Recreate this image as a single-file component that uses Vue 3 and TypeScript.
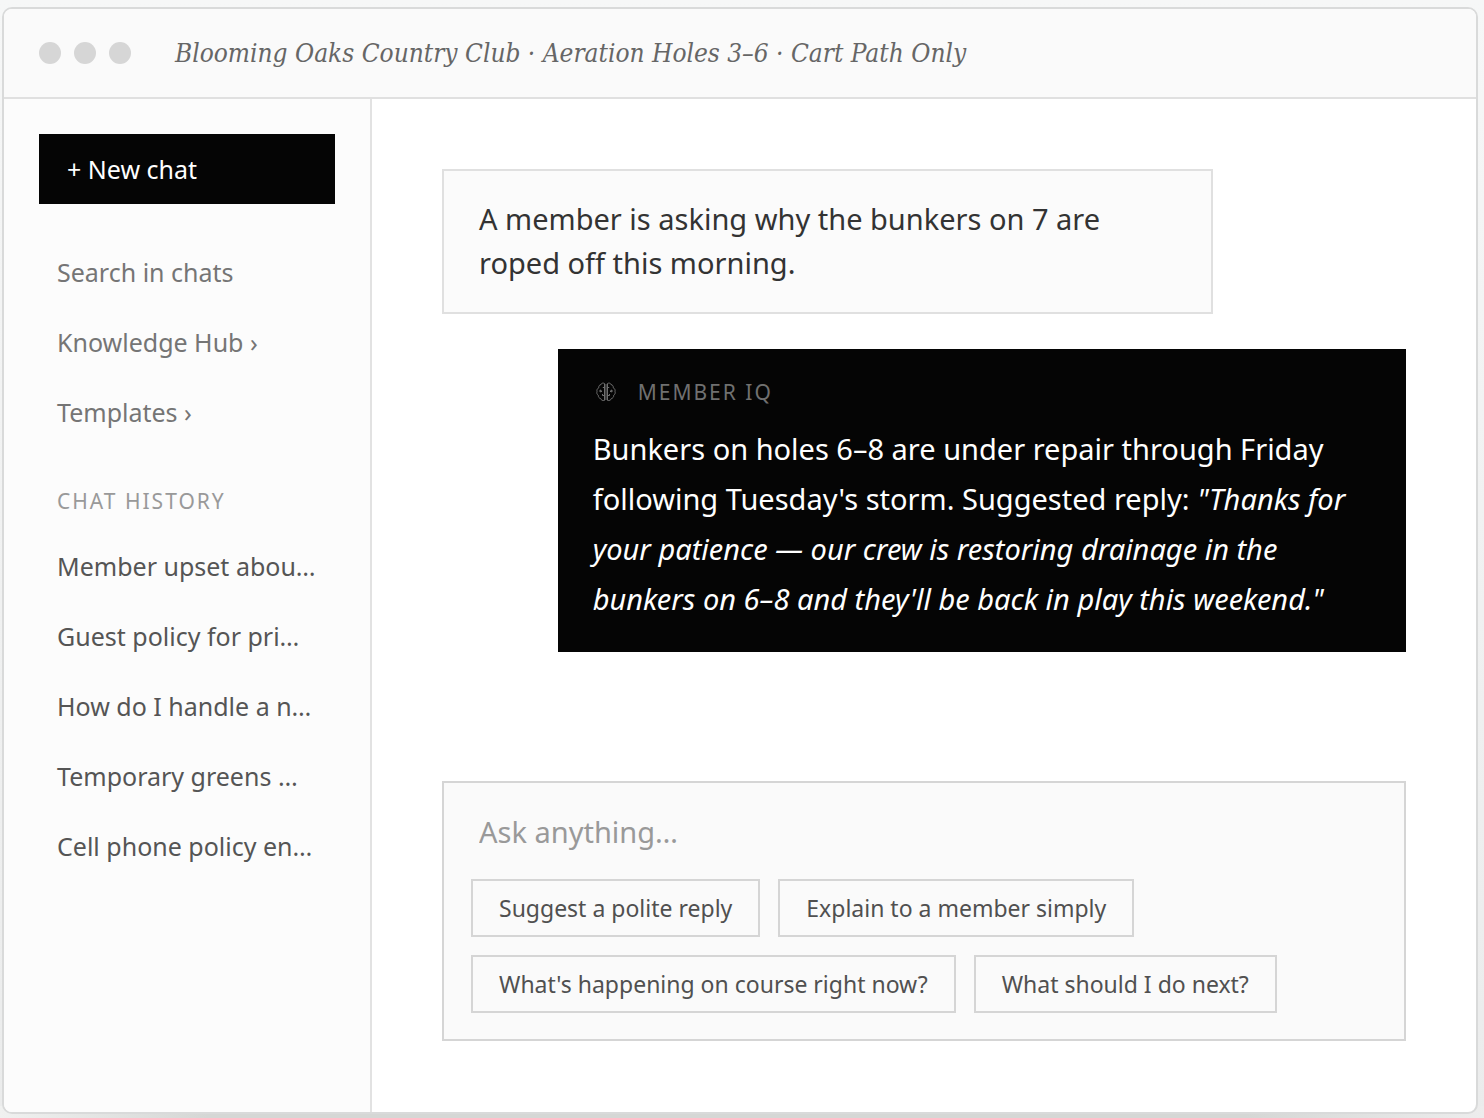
<script setup lang="ts">
import { ref } from 'vue'

const draft = ref('')

const links: string[] = ['Search in chats', 'Knowledge Hub ›', 'Templates ›']

const history: string[] = [
  'Member upset abou…',
  'Guest policy for pri…',
  'How do I handle a n…',
  'Temporary greens …',
  'Cell phone policy en…',
]

const prompts: string[] = [
  'Suggest a polite reply',
  'Explain to a member simply',
  "What's happening on course right now?",
  'What should I do next?',
]
</script>

<template>
  <div class="page">
    <div class="window">
      <header class="titlebar">
        <div class="dots"><span /><span /><span /></div>
        <h1>Blooming Oaks Country Club · Aeration Holes 3–6 · Cart Path Only</h1>
      </header>
      <div class="body">
        <aside class="sidebar">
          <button class="new-chat" type="button">+ New chat</button>
          <nav class="links">
            <button v-for="link in links" :key="link" type="button">{{ link }}</button>
          </nav>
          <h2>CHAT HISTORY</h2>
          <nav class="history">
            <button v-for="item in history" :key="item" type="button">{{ item }}</button>
          </nav>
        </aside>
        <main class="chat">
          <p class="message question">
            A member is asking why the bunkers on 7 are roped off this morning.
          </p>
          <article class="message answer">
            <div class="label">
              <svg viewBox="0 0 20 20" width="20" height="20" fill="none" stroke="currentColor" aria-hidden="true">
                <path d="M8.500 1.500C7 .6 5.300 1.200 5 2.600 3.400 2.800 2.500 4.200 2.800 5.700 1.300 6.500.6 8 1 9.500c-.5 1.500 0 3 1.300 3.800-.1 1.700.8 2.900 2.300 3.200.5 1.700 2.200 2.400 3.900 1.900z" />
                <path d="M11.500 1.500c1.500-.9 3.200-.3 3.500 1.100 1.600.2 2.500 1.600 2.200 3.100 1.500.8 2.200 2.300 1.800 3.800.5 1.500 0 3-1.300 3.800.1 1.700-.8 2.900-2.300 3.200-.5 1.700-2.200 2.400-3.900 1.900z" />
                <path d="M8.500 5.500H6.800M8.500 13.500H6.500V12M11.500 5.500h1.700M11.500 13.500h2V12M5 9.500h1M14 9.500h1" />
                <path d="M9.500 2v16M10.500 2v16" opacity=".5" />
                <circle cx="4.500" cy="9" r=".8" fill="currentColor" />
                <circle cx="15.500" cy="9" r=".8" fill="currentColor" />
              </svg>
              <span>MEMBER IQ</span>
            </div>
            <p>
              Bunkers on holes 6–8 are under repair through Friday following Tuesday's storm. Suggested reply:
              <em>"Thanks for your patience — our crew is restoring drainage in the bunkers on 6–8 and they'll be back in play this weekend."</em>
            </p>
          </article>
          <form class="composer" @submit.prevent>
            <input v-model="draft" type="text" placeholder="Ask anything…" aria-label="Ask anything" />
            <div class="prompts">
              <button v-for="prompt in prompts" :key="prompt" type="button">{{ prompt }}</button>
            </div>
          </form>
        </main>
      </div>
    </div>
  </div>
</template>

<style>
body {
  margin: 0;
}
</style>

<style scoped>
* {
  box-sizing: border-box;
}

.page {
  display: flex;
  min-height: 100vh;
  padding: 7px 6px 4px 2px;
  background:
    linear-gradient(90deg, #f0f1f0, #d5d7d5 14%, #d5d7d5 84%, #ededed) bottom / 100% 12px no-repeat,
    linear-gradient(180deg, #f6f7f7, #ebecec);
  font-family: "Segoe UI", "Noto Sans", "Open Sans", sans-serif;
}

.window {
  display: flex;
  flex: 1;
  flex-direction: column;
  min-width: 0;
  overflow: hidden;
  border: 2px solid #d9dada;
  border-radius: 10px;
  background: #fff;
}

.titlebar {
  display: flex;
  align-items: center;
  gap: 44px;
  height: 90px;
  padding: 0 35px;
  border-bottom: 2px solid #e0e0e0;
  background: #fafafa;
}

.dots {
  display: flex;
  gap: 13px;
}

.dots span {
  width: 22px;
  height: 22px;
  border-radius: 50%;
  background: #d6d6d6;
}

h1,
h2,
p {
  margin: 0;
  font-weight: 400;
}

h1 {
  color: #666;
  font: italic 26px/36px Georgia, "DejaVu Serif Condensed", "DejaVu Serif", serif;
  white-space: nowrap;
}

button,
input {
  border-radius: 0;
  font-family: inherit;
}

button {
  cursor: pointer;
}

.body {
  display: flex;
  flex: 1;
}

.sidebar {
  flex: none;
  width: 368px;
  padding: 35px;
  border-right: 2px solid #e2e2e2;
  background: #fcfcfc;
}

.sidebar button {
  display: block;
  width: 100%;
  height: 70px;
  padding: 0 18px;
  border: 0;
  background: none;
  font-size: 25px;
  line-height: 34px;
  text-align: left;
  white-space: nowrap;
}

.sidebar .new-chat {
  padding: 0 28px;
  background: #050505;
  color: #fff;
}

.links {
  margin-top: 33px;
}

.links button {
  color: #757575;
}

h2 {
  margin: 38px 0 14px;
  padding: 0 18px;
  color: #999;
  font-size: 21px;
  line-height: 32px;
  letter-spacing: 2px;
}

.history button {
  color: #555;
}

.chat {
  display: flex;
  flex: 1;
  flex-direction: column;
  gap: 35px;
  min-width: 0;
  padding: 70px 70px 71px;
}

.message {
  font-size: 29px;
}

.question {
  width: 80%;
  padding: 26px 35px 27px;
  border: 2px solid #e0e0e0;
  background: #fbfbfb;
  color: #333;
  line-height: 44px;
}

.answer {
  align-self: flex-end;
  width: 88%;
  padding: 27px 35px 28px;
  background: #050505;
  color: #fff;
  line-height: 50px;
}

.label {
  display: flex;
  align-items: center;
  gap: 22px;
  margin-bottom: 16px;
  padding-left: 3px;
  color: #707070;
  font-size: 21px;
  line-height: 32px;
  letter-spacing: 2px;
}

.label svg {
  flex: none;
}

.composer {
  margin-top: auto;
  padding: 26px 27px;
  border: 2px solid #d5d5d5;
  background: #fafafa;
}

.composer input {
  display: block;
  width: 100%;
  height: 44px;
  margin-bottom: 26px;
  padding: 0 8px;
  border: 0;
  outline: 0;
  background: none;
  color: #333;
  font-size: 29px;
}

.composer input::placeholder {
  color: #999;
  opacity: 1;
}

.prompts {
  display: flex;
  flex-wrap: wrap;
  gap: 18px;
}

.prompts button {
  height: 58px;
  padding: 0 26px;
  border: 2px solid #d5d5d5;
  background: #fafafa;
  color: #505050;
  font-size: 23px;
  line-height: 32px;
}
</style>
